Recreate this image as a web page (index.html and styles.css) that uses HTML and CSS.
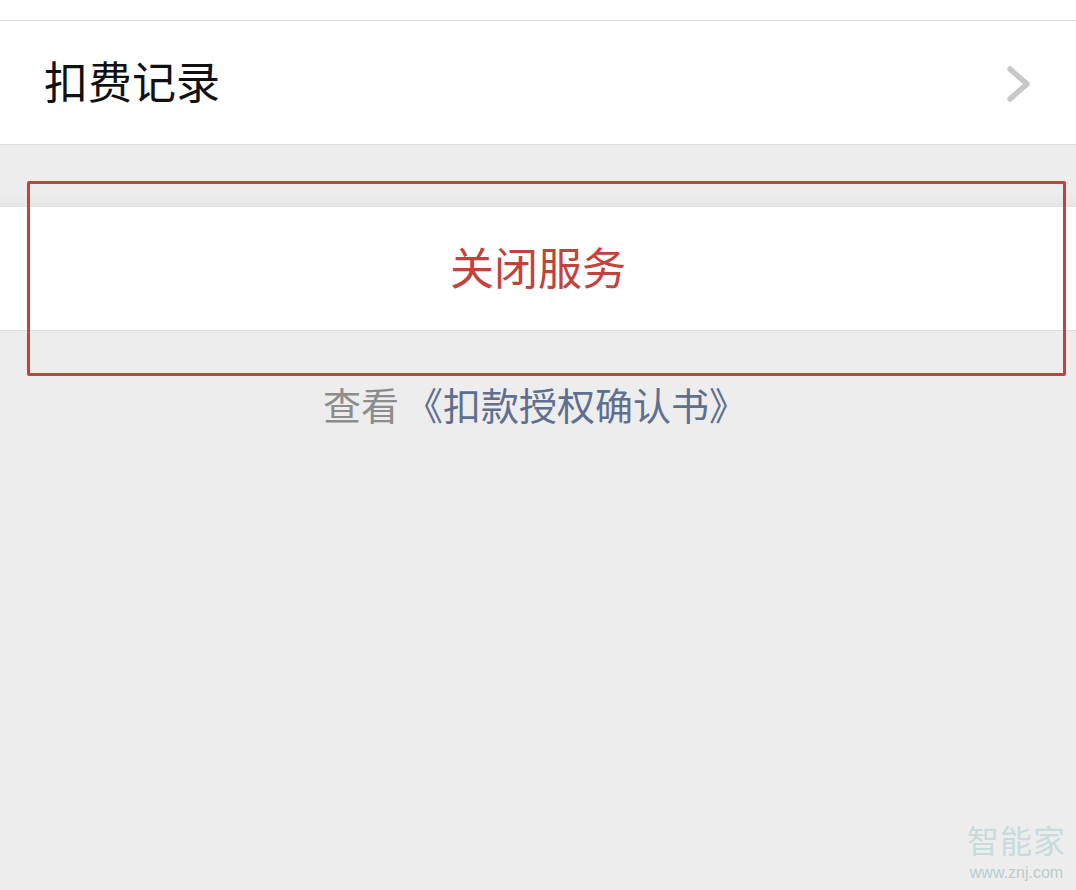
FILE: index.html
```html
<!DOCTYPE html>
<html lang="zh-CN">
<head>
<meta charset="utf-8">
<link rel="stylesheet" href="styles.css">
</head>
<body>
<div class="page">
  <div class="top-strip"></div>
  <div class="cell">
    <span class="cell-title">扣费记录</span>
    <svg class="chevron" width="26" height="38" viewBox="0 0 26 38"><path d="M4 4 L21 19 L4 34" fill="none" stroke="#c7c7c7" stroke-width="5.5" stroke-linecap="round" stroke-linejoin="round"/></svg>
  </div>
  <div class="gap"></div>
  <div class="cell danger">
    <span class="danger-text">关闭服务</span>
  </div>
  <div class="agreement">
    <span class="agree-gray">查看</span><span class="agree-link">《扣款授权确认书》</span>
  </div>
  <div class="highlight"></div>
  <div class="watermark">
    <div class="wm-cn">智能家</div>
    <div class="wm-url">www.znj.com</div>
  </div>
</div>
</body>
</html>
```
FILE: styles.css
```css
html, body {
  margin: 0;
  padding: 0;
  background: #ededed;
}
body {
  font-family: "Noto Sans CJK SC", "Noto Sans", sans-serif;
}
.page {
  position: relative;
  width: 1076px;
  height: 890px;
  overflow: hidden;
  background: #ededed;
}
.top-strip {
  height: 20px;
  background: #fff;
  border-bottom: 1px solid #dcdcdc;
}
.cell {
  height: 123px;
  background: #fff;
  border-bottom: 1px solid #dedede;
  display: flex;
  align-items: center;
  justify-content: space-between;
  padding: 0 44px 0 44px;
}
.cell-title {
  font-size: 44px;
  color: #111;
  line-height: 1;
  margin-top: -6px;
}
.chevron {
  margin-top: 2px;
}
.gap {
  height: 61px;
  background: linear-gradient(#ededed 0, #ededed 50px, #e6e6e6 61px);
  border-bottom: 1px solid #e2e2e2;
}
.cell.danger {
  justify-content: center;
}
.danger-text {
  font-size: 44px;
  color: #c4423c;
  line-height: 1;
  margin-top: -6px;
}
.agreement {
  display: flex;
  justify-content: center;
  align-items: center;
  font-size: 38px;
  line-height: 1;
  padding-top: 54px;
  padding-right: 6px;
}
.agree-gray {
  color: #8c8c8c;
}
.agree-link {
  color: #5e6f8f;
  margin-left: 6px;
}
.highlight {
  position: absolute;
  left: 27px;
  top: 181px;
  width: 1033px;
  height: 189px;
  border: 3px solid #c9403a;
  border-radius: 2px;
}
.watermark {
  position: absolute;
  right: 10px;
  bottom: 9px;
  display: flex;
  flex-direction: column;
  align-items: center;
  color: #c6dcdc;
}
.wm-cn {
  font-size: 32px;
  line-height: 34px;
  letter-spacing: 1px;
}
.wm-url {
  font-family: "Liberation Sans", Arial, sans-serif;
  font-size: 16px;
  line-height: 17px;
  margin-top: 8px;
  color: #b9cccc;
}
```
